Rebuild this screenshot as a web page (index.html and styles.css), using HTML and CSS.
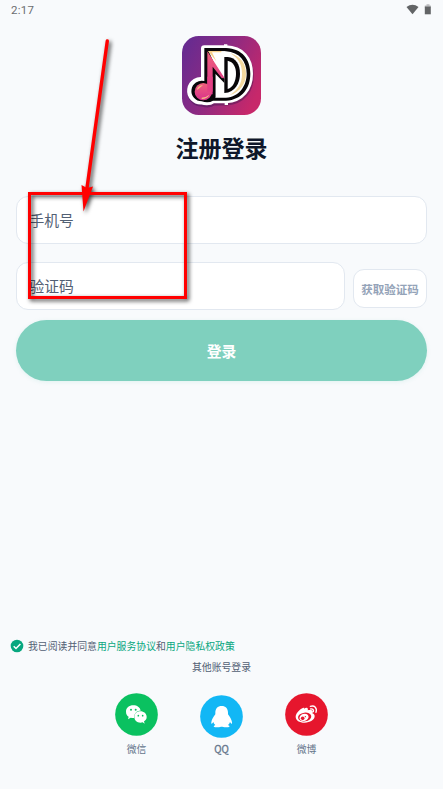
FILE: index.html
```html
<!DOCTYPE html>
<html lang="zh-CN">
<head>
<meta charset="utf-8">
<title>注册登录</title>
<link rel="stylesheet" href="styles.css">
</head>
<body>
<div class="screen">
  <header class="status">
    <span>2:17</span>
    <svg class="status-icons" viewBox="0 0 26 12">
      <path d="M.5 3Q6.500-1.300 12.500 3L6.500 10.300Z" fill="#626466"/>
      <path d="M20.500.2h3v1.300h1.300v2h-6v-2h1.700Z" fill="#b9bbbd"/>
      <path d="M18.800 2.600h6v7.700h-6Z" fill="#626466"/>
    </svg>
  </header>
  <main class="main">
    <svg class="logo" viewBox="6 6 237 237">
      <defs>
        <linearGradient id="bg" x1="0" y1=".15" x2="1" y2=".65">
          <stop offset="0" stop-color="#662b91"/><stop offset=".45" stop-color="#8a2a83"/><stop offset="1" stop-color="#c7286a"/>
        </linearGradient>
        <linearGradient id="pink" x1="0" y1="0" x2="0" y2="1">
          <stop offset="0" stop-color="#f0607c"/><stop offset="1" stop-color="#d9318c"/>
        </linearGradient>
      </defs>
      <rect x="6" y="6" width="237" height="237" rx="50" fill="url(#bg)"/>
      <path d="M73 44H138C185 45 209 76 209 119S185 195 138 198H99Q85 208 65 201A31 31 0 1 1 73 141Z" fill="#301449" stroke="#301449" stroke-width="21" stroke-linejoin="round" opacity=".4" transform="translate(2 6)"/>
      <path d="M73 44H138C185 45 209 76 209 119S185 195 138 198H99Q85 208 65 201A31 31 0 1 1 73 141Z" fill="#fff" stroke="#fff" stroke-width="20" stroke-linejoin="round"/>
      <path d="M132 31h10v12h-10ZM134 200h10v13h-10Z" fill="#fff"/>
      <path d="M73 42H138C187 44 211 76 211 119S187 197 138 200H99Q85 209 65 202A31 31 0 1 1 73 141Z" fill="#080609"/>
      <path d="M83 52H138C179 55 200 83 200 119S178 188 138 191H106V112L131 139V62Z" fill="#fff"/>
      <path d="M86 52H136V138L106 96Z" fill="#fff"/>
      <path d="M150 57C182 67 198 89 198 119S180 174 148 184C175 167 186 147 186 119S175 72 150 57Z" fill="#f4d99f"/>
      <path d="M133 69H143C168 71 180 92 180 119S166 175 133 177Z" fill="#080609"/>
      <path d="M143 80C160 84 168 98 168 119S159 161 143 165Z" fill="#fff"/>
      <path d="M98 88L133 134V147L106 119V190H98Z" fill="#080609"/>
      <path d="M82 52L134 133L125 132L98 98V181H82Z" fill="url(#pink)"/>
      <path d="M84 51h40v4H96l13 27Z" fill="#f8d18b"/>
      <circle cx="70" cy="173" r="26" fill="url(#pink)"/>
      <path d="M82 128h16v45h-16Z" fill="#e44084"/>
      <path d="M50 168Q54 154 69 153L56 164ZM65 191Q80 190 88 182Q83 194 65 195Z" fill="#f6bf81"/>
    </svg>
    <h1 class="title">注册登录</h1>
    <form class="form">
      <div class="field">手机号</div>
      <div class="code-row">
        <div class="field code-field">验证码</div>
        <button class="code-button" type="button">获取验证码</button>
      </div>
      <button class="login" type="button">登录</button>
    </form>
  </main>
  <footer class="footer">
    <div class="agreement">
      <svg class="check" viewBox="0 0 14 14"><circle cx="7" cy="7" r="6.300" fill="#08a77f"/><path d="M3.700 7.200L6 9.500l4.400-4.600" fill="none" stroke="#fff" stroke-width="1.500"/></svg>
      <span>我已阅读并同意<a>用户服务协议</a>和<a>用户隐私权政策</a></span>
    </div>
    <div class="other">其他账号登录</div>
    <div class="accounts">
      <div class="account">
        <svg class="brand" viewBox="0 0 129 129">
          <circle cx="64.500" cy="64.500" r="64" fill="#0ac160"/>
          <path d="M55 37c-13 0-22 8-22 19 0 7 3 12 8 15l-2 8 8-5c3 1 6 1 10 1 0-14 8-22 20-22-2-10-11-16-22-16Z" fill="#fff"/>
          <path d="M76 55c-11 0-18 7-18 17 0 11 11 20 25 16l6 4-2-7c5-3 8-7 8-13 0-10-8-17-19-17Z" fill="#fff"/>
          <g fill="#0ac160"><circle cx="48" cy="50" r="3"/><circle cx="62" cy="50" r="3"/><circle cx="70" cy="68" r="2.500"/><circle cx="83" cy="68" r="2.500"/></g>
        </svg>
        <span>微信</span>
      </div>
      <div class="account qq">
        <svg class="brand" viewBox="0 0 129 129">
          <circle cx="64.500" cy="64.500" r="64" fill="#12b7f5"/>
          <path d="M65 33c-12 0-19 8-19 20v5c-6 8-11 16-12 24-1 6 2 6 6-1 1 4 3 7 6 9-7 3-6 7 2 7 7 0 12-1 15-2h4c4 1 8 2 15 2 8 0 9-4 2-7 3-2 5-5 6-9 4 7 7 7 6 1-1-8-6-16-12-24v-5c0-12-7-20-19-20Z" fill="#fff"/>
        </svg>
        <span>QQ</span>
      </div>
      <div class="account">
        <svg class="brand" viewBox="0 0 129 129">
          <circle cx="64.500" cy="64.500" r="64" fill="#e6162d"/>
          <path d="M57 48c4-4 8-5 10-3 2 2 2 4 1 7 6-2 13-2 15 2 1 3 1 5-1 7 5 2 7 5 7 9 0 10-14 19-30 19-16 0-27-7-27-18 0-8 8-18 17-24 7-4 11-4 8 1Z" fill="#fff"/>
          <ellipse cx="59" cy="72" rx="20" ry="13" fill="#e6162d" transform="rotate(-8 59 72)"/>
          <ellipse cx="57" cy="73" rx="14" ry="10.500" fill="#fff" transform="rotate(-18 57 73)"/>
          <circle cx="53" cy="76" r="5.500" fill="#e6162d"/><circle cx="61" cy="71" r="2" fill="#e6162d"/>
          <path d="M76 40c13-4 21 5 17 18M77 48c6-2 10 3 8 8" fill="none" stroke="#fff" stroke-width="4" stroke-linecap="round"/>
        </svg>
        <span>微博</span>
      </div>
    </div>
  </footer>
  <svg class="annotation" viewBox="0 0 443 789">
    <rect x="29.500" y="193.500" width="156" height="104" fill="none" stroke="#f00" stroke-width="3"/>
    <path d="M107.300 41L87 188" fill="none" stroke="#f00" stroke-width="3.400" stroke-linecap="round"/>
    <path d="M81.500 185L87 188L93 186.500L83.500 211.500Z" fill="#f00"/>
  </svg>
</div>
</body>
</html>
```
FILE: styles.css
```css
* {
  box-sizing: border-box;
}

body {
  margin: 0;
  background: #f8fafc;
  color: #526074;
  font-family: Roboto, "Noto Sans CJK SC", sans-serif;
}

.screen {
  position: relative;
  display: flex;
  flex-direction: column;
  height: 789px;
  overflow: hidden;
}

.status {
  display: flex;
  justify-content: space-between;
  height: 36px;
  padding: 4px 11px 0;
  font-size: 11.5px;
  line-height: 13px;
  letter-spacing: 0.3px;
  color: #6b6d70;
}

.status-icons {
  width: 26px;
  height: 12px;
}

.main {
  display: flex;
  flex-direction: column;
  align-items: center;
  padding: 0 16px;
}

.logo {
  width: 79px;
  height: 79px;
}

.title {
  margin: 18px 0 29px;
  font-size: 23px;
  line-height: 34px;
  font-weight: 700;
  color: #0f172a;
}

.form {
  display: flex;
  flex-direction: column;
  width: 100%;
}

.field {
  height: 48px;
  padding-left: 12.5px;
  border: 1px solid #e2e8f0;
  border-radius: 12px;
  background: #fff;
  font-size: 14.8px;
  line-height: 48px;
}

.code-row {
  display: flex;
  align-items: flex-end;
  gap: 8px;
  margin: 18px 0 10px;
}

.code-field {
  flex: 1;
}

.code-button {
  width: 74px;
  height: 39px;
  margin-bottom: 2px;
  padding: 0;
  border: 1px solid #e2e8f0;
  border-radius: 11px;
  background: #fff;
  font: 700 11.5px "Noto Sans CJK SC", sans-serif;
  color: #94a3b8;
}

.login {
  height: 61px;
  padding: 0;
  border: 0;
  border-radius: 31px;
  background: #7fd0be;
  box-shadow: 0 1px 4px #7fd0be30;
  font: 700 14.8px "Noto Sans CJK SC", sans-serif;
  color: #fff;
}

.footer {
  margin-top: auto;
  height: 151px;
  font-size: 9.86px;
  line-height: 14px;
}

.agreement {
  display: flex;
  align-items: center;
  gap: 4px;
  height: 15px;
  padding-left: 10px;
}

.agreement span {
  padding-top: 2px;
}

.check {
  width: 14px;
  height: 14px;
}

.agreement a {
  color: #08a77f;
}

.other {
  margin-top: 8px;
  text-align: center;
}

.accounts {
  display: flex;
  justify-content: center;
  gap: 42px;
  margin-top: 18px;
}

.account {
  display: flex;
  flex-direction: column;
  align-items: center;
  gap: 7px;
  width: 43px;
  color: #64748b;
}

.brand {
  width: 43px;
  height: 43px;
}

.qq {
  padding-top: 2px;
  gap: 4px;
}

.qq span {
  font-family: "Noto Sans CJK SC", sans-serif;
  -webkit-text-stroke: 0.3px;
}

.annotation {
  position: absolute;
  inset: 0;
  width: 443px;
  height: 789px;
  pointer-events: none;
  filter: drop-shadow(2px 2px 2px #000b);
}
```
